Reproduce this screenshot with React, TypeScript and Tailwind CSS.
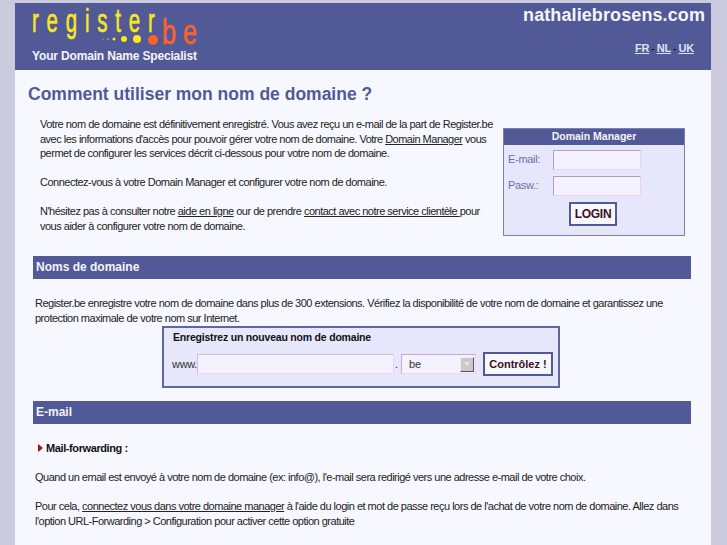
import React from 'react';

const Logo: React.FC = () => (
  <svg width="190" height="67" viewBox="0 0 190 67" className="block">
    <g transform="translate(17 0) scale(0.62 1)" fontFamily="'Liberation Sans', sans-serif">
      <text x="0" y="29" fontSize="33" fill="#fbe71f" stroke="#fbe71f" strokeWidth="0.6" textLength="198" lengthAdjust="spacing">register</text>
    </g>
    <g transform="translate(147 0) scale(0.7 1)" fontFamily="'Liberation Sans', sans-serif">
      <text x="0" y="41" fontSize="36" fill="#f9632b" stroke="#f9632b" strokeWidth="0.6" textLength="50" lengthAdjust="spacing">be</text>
    </g>
    <circle cx="88" cy="36" r="0.5" fill="#fbe71f" />
    <circle cx="93" cy="36" r="0.7" fill="#fbe71f" />
    <circle cx="99" cy="36" r="1.5" fill="#fbe71f" />
    <circle cx="109" cy="36" r="3" fill="#fbe71f" />
    <circle cx="122" cy="36" r="4" fill="#fbe71f" />
    <circle cx="138" cy="37" r="5" fill="#f9632b" />
    <text x="17" y="57" fontFamily="'Liberation Sans', sans-serif" fontSize="12" fontWeight="700" fill="#f4f4f8" textLength="165">Your Domain Name Specialist</text>
  </svg>
);

const SectionBar: React.FC<{ title: string }> = ({ title }) => (
  <div className="ml-[18px] h-[23px] w-[658px] bg-[#515a96] px-[3px] text-[12px] leading-[22px] font-bold text-[#f4f4f8]">
    {title}
  </div>
);

const Field: React.FC<{ label: string }> = ({ label }) => (
  <div className="flex h-[26px] items-start">
    <span className="w-[49px] pl-[4px] text-[11px] leading-[19px] tracking-[-0.3px] text-[#6a70a8]">{label}</span>
    <div className="h-[20px] w-[88px] border border-[#b89cc8] border-r-[#f0d0f8] border-b-[#f0d0f8] bg-[#f5f2ff]" />
  </div>
);

const App: React.FC = () => {
  return (
    <div className="h-[545px] overflow-hidden bg-[#cccbdd] pt-[3px] font-['Liberation_Sans',sans-serif] text-[11px] leading-[14.5px] tracking-[-0.5px] text-[#222]">
      <div className="ml-[15px] h-[542px] w-[696px] overflow-hidden bg-[#f7f8ff] whitespace-nowrap">
        <header className="flex h-[67px] justify-between bg-[#515a96] tracking-normal">
          <Logo />
          <div className="flex flex-col items-end pr-[6px]">
            <div className="text-[18px] leading-[24px] font-bold tracking-[0.1px] text-[#f4f4f8]">nathaliebrosens.com</div>
            <div className="mt-[14px] mr-[11px] flex gap-[2px] text-[11px] font-bold tracking-[-0.2px] text-[#dfe0f2]">
              <a className="underline">FR</a>
              <span className="text-[#222]">-</span>
              <a className="underline">NL</a>
              <span className="text-[#222]">-</span>
              <a className="underline">UK</a>
            </div>
          </div>
        </header>

        <h1 className="pt-[12px] pl-[13px] text-[17.5px] leading-[24px] font-bold tracking-normal text-[#515a96]">
          Comment utiliser mon nom de domaine ?
        </h1>

        <div className="mt-[11px] flex h-[128px]">
          <div className="w-[488px] shrink-0 pl-[25px]">
            <p>
              Votre nom de domaine est définitivement enregistré. Vous avez reçu un e-mail de la part de Register.be<br />
              avec les informations d'accès pour pouvoir gérer votre nom de domaine. Votre <a className="underline">Domain Manager</a> vous<br />
              permet de configurer les services décrit ci-dessous pour votre nom de domaine.
            </p>
            <p className="mt-[14.5px]">Connectez-vous à votre Domain Manager et configurer votre nom de domaine.</p>
            <p className="mt-[14.5px]">
              N'hésitez pas à consulter notre <a className="underline">aide en ligne</a> our de prendre <a className="underline">contact avec notre service clientèle </a>pour<br />
              vous aider à configurer votre nom de domaine.
            </p>
          </div>
          <div className="mt-[11px] h-[108px] w-[182px] border border-[#7a80b4] bg-[#e6e7fb] tracking-normal">
            <div className="h-[16px] bg-[#515a96] text-center text-[10.5px] leading-[15px] font-bold text-[#f4f4f8]">Domain Manager</div>
            <div className="pt-[5px]">
              <Field label="E-mail:" />
              <Field label="Pasw.:" />
            </div>
            <div className="flex justify-center pr-[2px]">
              <button className="h-[24px] w-[48px] border-2 border-[#515a96] bg-[#f7f8ff] text-[12px] font-bold tracking-[-0.3px] text-[#3a1020]">LOGIN</button>
            </div>
          </div>
        </div>

        <div className="mt-[11px] tracking-normal">
          <SectionBar title="Noms de domaine" />
        </div>

        <p className="mt-[17px] pl-[20px]">
          Register.be enregistre votre nom de domaine dans plus de 300 extensions. Vérifiez la disponibilité de votre nom de domaine et garantissez une<br />
          protection maximale de votre nom sur Internet.
        </p>

        <div className="mt-[1px] ml-[147px] h-[62px] w-[398px] border-2 border-[#5f66a0] bg-[#e6e7fb] pl-[9px] tracking-normal">
          <div className="pt-[2px] text-[10.5px] leading-[15px] font-bold tracking-[-0.2px] text-[#111]">Enregistrez un nouveau nom de domaine</div>
          <div className="mt-[7px] -ml-[1px] flex items-center">
            <span className="w-[25px] tracking-[-0.3px] text-[#333]">www.</span>
            <div className="h-[20px] w-[197px] border border-[#d8b8e0] border-r-[#f0d0f8] border-b-[#f0d0f8] bg-[#f5f2ff]" />
            <span className="w-[7px] pl-[1px] text-[#333]">.</span>
            <div className="flex h-[20px] w-[75px] items-center justify-between border border-[#c8a8d0] border-r-[#f0d0f8] border-b-[#f0d0f8] bg-[#f5f2ff] pr-[1px] pl-[7px]">
              <span className="text-[#333]">be</span>
              <div className="flex h-[15px] w-[14px] items-center justify-center border border-[#eee] border-r-[#555] border-b-[#555] bg-[#c9c9c9]">
                <span className="border-x-[3px] border-t-[4px] border-x-transparent border-t-[#e4e4e4]" />
              </div>
            </div>
            <button className="ml-[7px] h-[24px] w-[70px] border-2 border-[#515a96] bg-[#f7f8ff] text-[11px] font-bold text-[#3a1020]">Contrôlez !</button>
          </div>
        </div>

        <div className="mt-[13px] tracking-normal">
          <SectionBar title="E-mail" />
        </div>

        <div className="mt-[17px] flex items-center pl-[23px] font-bold tracking-[-0.4px] text-[#111]">
          <span className="mr-[3px] border-y-[4px] border-l-[5px] border-y-transparent border-l-[#a01018]" />
          Mail-forwarding :
        </div>

        <p className="mt-[14.5px] pl-[20px]">Quand un email est envoyé à votre nom de domaine (ex: info@), l'e-mail sera redirigé vers une adresse e-mail de votre choix.</p>
        <p className="mt-[14.5px] pl-[20px]">
          Pour cela, <a className="underline">connectez vous dans votre domaine manager</a> à l'aide du login et mot de passe reçu lors de l'achat de votre nom de domaine. Allez dans<br />
          l'option URL-Forwarding &gt; Configuration pour activer cette option gratuite
        </p>
      </div>
    </div>
  );
};

export default App;
